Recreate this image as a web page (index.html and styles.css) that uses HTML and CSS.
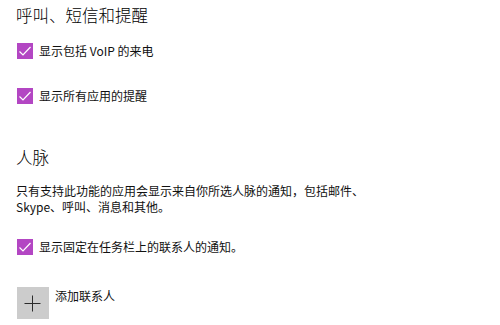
FILE: index.html
```html
<!DOCTYPE html>
<html lang="zh-CN">
<head>
<meta charset="utf-8">
<link rel="stylesheet" href="styles.css">
</head>
<body>
<div class="page">
  <h2 class="heading first">呼叫、短信和提醒</h2>
  <label class="check row1">
    <span class="box"><svg width="16" height="16" viewBox="0 0 16 16"><path d="M2.5 8.5 L6 12 L13.5 4" fill="none" stroke="#fff" stroke-width="1.2"/></svg></span>
    <span class="label">显示包括 VoIP 的来电</span>
  </label>
  <label class="check row2">
    <span class="box"><svg width="16" height="16" viewBox="0 0 16 16"><path d="M2.5 8.5 L6 12 L13.5 4" fill="none" stroke="#fff" stroke-width="1.2"/></svg></span>
    <span class="label">显示所有应用的提醒</span>
  </label>
  <h2 class="heading second">人脉</h2>
  <p class="desc">只有支持此功能的应用会显示来自你所选人脉的通知，包括邮件、<br>Skype、呼叫、消息和其他。</p>
  <label class="check row3">
    <span class="box"><svg width="16" height="16" viewBox="0 0 16 16"><path d="M2.5 8.5 L6 12 L13.5 4" fill="none" stroke="#fff" stroke-width="1.2"/></svg></span>
    <span class="label">显示固定在任务栏上的联系人的通知。</span>
  </label>
  <div class="add">
    <span class="plus"><svg width="32" height="32" viewBox="0 0 32 32"><path d="M7.5 16.5 H23.5 M15.5 8.5 V24.5" stroke="#2b2b2b" stroke-width="1"/></svg></span>
    <span class="add-label">添加联系人</span>
  </div>
</div>
</body>
</html>
```
FILE: styles.css
```css
html, body {
  margin: 0;
  padding: 0;
  background: #fff;
}
body {
  font-family: "Noto Sans CJK SC", "Noto Sans", sans-serif;
  color: #111;
}
.page {
  padding: 3px 0 0 16px;
  display: flex;
  flex-direction: column;
  align-items: flex-start;
}
.heading {
  margin: 0;
  font-size: 16.5px;
  font-weight: 300;
  line-height: 24px;
  height: 24px;
  color: #000;
}
.check {
  display: flex;
  align-items: center;
  gap: 6px;
  height: 16px;
  padding-left: 1px;
}
.box {
  width: 16px;
  height: 16px;
  background: #b346c3;
  display: block;
}
.box svg { display: block; }
.label {
  font-size: 12px;
  line-height: 16px;
}
.row1 { margin-top: 16px; }
.row2 { margin-top: 29px; }
.second { margin-top: 40.5px; }
.desc {
  margin: 14px 0 0;
  font-size: 12px;
  line-height: 16px;
}
.row3 { margin-top: 24.5px; }
.add {
  margin-top: 32px;
  padding-left: 1px;
  display: flex;
  align-items: flex-start;
  gap: 6px;
}
.plus {
  width: 32px;
  height: 32px;
  background: #cccccc;
  display: block;
}
.plus svg { display: block; }
.add-label {
  font-size: 12px;
  line-height: 16px;
  padding-top: 1px;
}
```
